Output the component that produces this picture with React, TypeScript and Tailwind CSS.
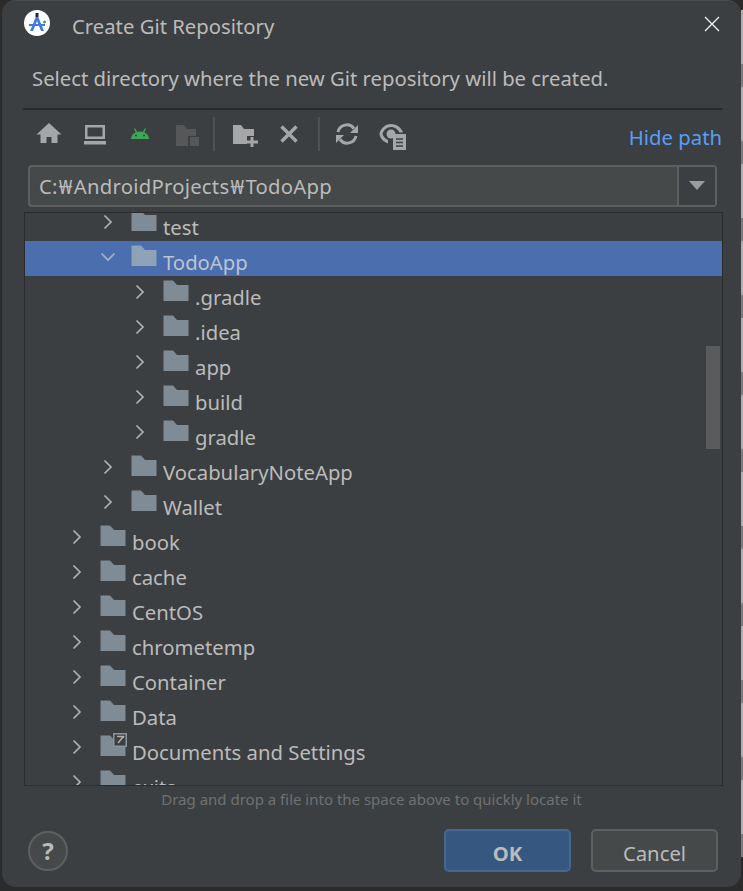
import type { ReactNode } from "react";

type Row = { name: string; depth: number; open?: boolean; selected?: boolean; link?: boolean };

const rows: Row[] = [
  { name: "test", depth: 2 },
  { name: "TodoApp", depth: 2, open: true, selected: true },
  { name: ".gradle", depth: 3 },
  { name: ".idea", depth: 3 },
  { name: "app", depth: 3 },
  { name: "build", depth: 3 },
  { name: "gradle", depth: 3 },
  { name: "VocabularyNoteApp", depth: 2 },
  { name: "Wallet", depth: 2 },
  { name: "book", depth: 1 },
  { name: "cache", depth: 1 },
  { name: "CentOS", depth: 1 },
  { name: "chrometemp", depth: 1 },
  { name: "Container", depth: 1 },
  { name: "Data", depth: 1 },
  { name: "Documents and Settings", depth: 1, link: true },
  { name: "exits", depth: 1 },
];

// the window behind the dialog shows through at the right edge
const bands = [0, 1, 2, 3, 4, 5, 6, 7, 8, 9, 10];

function Folder({ selected }: { selected?: boolean }) {
  return (
    <svg width="26" height="22" viewBox="0 0 26 22" className="shrink-0">
      <path d="M0.5 0.5H10L14 5H25.5V21H0.5Z" fill={selected ? "#8fa3b8" : "#7f8b95"} />
    </svg>
  );
}

function Chevron({ open }: { open?: boolean }) {
  return (
    <svg width="16" height="16" viewBox="0 0 16 16" className="shrink-0" fill="none" stroke={open ? "#a9b4c4" : "#afb1b3"} strokeWidth="1.7">
      {open ? <path d="M1.5 4.5L8 11L14.5 4.5" /> : <path d="M4.5 1.5L11 8L4.5 14.5" />}
    </svg>
  );
}

function TreeRow({ row }: { row: Row }) {
  const pad = row.depth === 1 ? "pl-[44px]" : row.depth === 2 ? "pl-[75px]" : "pl-[107px]";
  return (
    <div className={`flex h-[35px] items-center ${pad} ${row.selected ? "bg-[#4b6eaf] text-[#bbc4d2]" : "text-[#bbbbbb]"}`}>
      <div className="-mt-[3px]">
        <Chevron open={row.open} />
      </div>
      <div className="relative -mt-[5px] ml-[15px]">
        <Folder selected={row.selected} />
        {row.link ? (
          <svg width="14" height="14" viewBox="0 0 14 14" className="absolute -top-[2px] left-[13px]">
            <rect width="14" height="14" fill="#8a969f" />
            <rect x="1.5" y="1.5" width="11" height="11" fill="#3c3f41" />
            <path d="M4 3.5H10.5V5M10 4L5 10" fill="none" stroke="#afb1b3" strokeWidth="1.4" />
          </svg>
        ) : null}
      </div>
      <span className="ml-[6px] pt-[7px] text-[20.3px] leading-none">{row.name}</span>
    </div>
  );
}

function ToolIcon({ children }: { children: ReactNode }) {
  return (
    <svg width="26" height="26" viewBox="0 0 26 26" className="shrink-0 overflow-visible">
      {children}
    </svg>
  );
}

function Toolbar() {
  return (
    <div className="flex h-[46px] items-center pl-[34px] pr-[19px]">
      <div className="flex items-center gap-[20px]">
        <ToolIcon>
          <path d="M13 2L25.5 13.5H21.5V22H15.5V16H10.5V22H4.5V13.5H0.5Z" fill="#a4a6a8" />
        </ToolIcon>
        <ToolIcon>
          <path d="M3 4H23V18H3ZM5.5 6.5V15.5H20.5V6.5Z" fill="#a4a6a8" fillRule="evenodd" />
          <rect x="2" y="20" width="22" height="3.5" fill="#a4a6a8" />
        </ToolIcon>
        <ToolIcon>
          <path d="M3 18C3 13.5 7 10.5 12 10.5C17 10.5 21 13.5 21 18Z" fill="#3aa858" />
          <path d="M6.5 7.5L9 12M17.5 7.5L15 12" stroke="#3aa858" strokeWidth="1.4" />
          <circle cx="8" cy="14.5" r="1" fill="#3c3f41" />
          <circle cx="16" cy="14.5" r="1" fill="#3c3f41" />
        </ToolIcon>
        <ToolIcon>
          <path d="M2 4H10L13 8H22V15H14V25H2Z" fill="#555758" />
          <rect x="16" y="16" width="9" height="9" fill="#555758" />
        </ToolIcon>
      </div>
      <div className="ml-[13px] h-[34px] w-[2px] bg-[#4f5254]" />
      <div className="ml-[17px] flex items-center gap-[18px]">
        <ToolIcon>
          <path d="M1 4H9L12 8H22V15H15V23H1Z" fill="#a4a6a8" />
          <path d="M20 16V26M15 21H26" stroke="#a4a6a8" strokeWidth="3" />
        </ToolIcon>
        <ToolIcon>
          <path d="M5.5 5.5L20.5 20.5M20.5 5.5L5.5 20.5" stroke="#a4a6a8" strokeWidth="3.4" />
        </ToolIcon>
      </div>
      <div className="ml-[16px] h-[34px] w-[2px] bg-[#4f5254]" />
      <div className="ml-[14px] flex items-center gap-[19px]">
        <ToolIcon>
          <path d="M4 11A9 9 0 0 1 20 7.5" fill="none" stroke="#a4a6a8" strokeWidth="3" />
          <path d="M24 4V12H16Z" fill="#a4a6a8" />
          <path d="M22 15A9 9 0 0 1 6 18.5" fill="none" stroke="#a4a6a8" strokeWidth="3" />
          <path d="M2 22V14H10Z" fill="#a4a6a8" />
        </ToolIcon>
        <ToolIcon>
          <path d="M12 3C6 3 1 8 0.5 13C1 18 5 21 9 22.5V19C6.5 18 4.5 16 3.5 13C4.5 9 8 6 12 6C16 6 19 8.5 20.5 11.5H24C22.5 7 18 3 12 3Z" fill="#a4a6a8" />
          <circle cx="12" cy="13" r="4.5" fill="#a4a6a8" />
          <path d="M14 13H27V29H14Z" fill="#a4a6a8" />
          <path d="M17 18H24M17 21.5H24M17 25H24" stroke="#3c3f41" strokeWidth="1.5" />
        </ToolIcon>
      </div>
      <span className="ml-auto pt-[7px] text-[20.3px] leading-none text-[#589df6]">Hide path</span>
    </div>
  );
}

function Won() {
  return <span className="inline-block w-[16px] text-center">₩</span>;
}

export default function App() {
  return (
    <div className="flex h-[891px] w-[743px] overflow-hidden bg-[#2b2b2b] font-['Noto_Sans','Liberation_Sans',sans-serif]">
      <div className="w-[2px] shrink-0" />
      <div className="flex h-[887px] w-[739px] shrink-0 flex-col rounded-[14px] border-t border-[#4a4c4e] bg-[#3c3f41]">
        <header className="flex h-[52px] items-center pl-[22px] pr-[20px]">
          <svg width="26" height="26" viewBox="0 0 26 26" className="-mt-[8px] shrink-0">
            <circle cx="13" cy="13" r="13" fill="#ffffff" />
            <path d="M13 4L6 21H9L13 11L17 21H20Z" fill="#3f7be8" />
            <path d="M5 15H21" stroke="#3f7be8" strokeWidth="2" />
            <rect x="11.5" y="3" width="3" height="4" fill="#202a44" />
            <circle cx="20.5" cy="12" r="1.5" fill="#3aa858" />
          </svg>
          <span className="ml-[22px] pb-[2px] text-[20.3px] leading-none text-[#bbbbbb]">Create Git Repository</span>
          <svg width="16" height="16" viewBox="0 0 16 16" className="-mt-[6px] mr-[1px] ml-auto" fill="none" stroke="#eeeeee" strokeWidth="1.4">
            <path d="M1 1L15 15M15 1L1 15" />
          </svg>
        </header>
        <p className="flex h-[55px] items-center pb-[4px] pl-[30px] text-[20.3px] leading-none text-[#bbbbbb]">
          Select directory where the new Git repository will be created.
        </p>
        <div className="ml-[21px] mr-[18px] h-[2px] bg-[#2b2b2b]" />
        <div className="mt-[1px]">
          <Toolbar />
        </div>
        <div className="ml-[26px] mr-[24px] mt-[8px] flex h-[42px] rounded-[4px] border-2 border-[#5e6060] bg-[#45494a]">
          <span className="flex flex-1 items-center pl-[9px] pt-[1px] text-[20.3px] leading-none tracking-[0.25px] text-[#bbbbbb]">
            <span>
              C:
              <Won />
              AndroidProjects
              <Won />
              TodoApp
            </span>
          </span>
          <span className="flex w-[38px] items-center justify-center border-l-2 border-[#5e6060] bg-[#3c3f41]">
            <svg width="16" height="10" viewBox="0 0 16 10">
              <path d="M0 0H16L8 9Z" fill="#9a9c9e" />
            </svg>
          </span>
        </div>
        <div className="relative ml-[22px] mr-[18px] mt-[5px] h-[574px] overflow-hidden border border-[#2b2b2b]">
          <div className="-mt-[7px]">
            {rows.map((row) => (
              <TreeRow key={row.name} row={row} />
            ))}
          </div>
          <div className="absolute right-[2px] top-[133px] h-[103px] w-[14px] bg-[#595b5d]" />
        </div>
        <p className="mt-[2px] text-center text-[15px] leading-[22px] text-[#6f7173]">Drag and drop a file into the space above to quickly locate it</p>
        <footer className="mt-[19px] flex items-center pl-[26px] pr-[23px]">
          <span className="flex h-[40px] w-[40px] items-center justify-center rounded-full border-2 border-[#5e6060] bg-[#45494a] text-[24px] font-bold leading-none text-[#bbbbbb]">?</span>
          <button type="button" className="ml-auto h-[43px] w-[127px] rounded-[5px] border-2 border-[#43698f] bg-[#365880] pt-[5px] text-[20.3px] font-bold leading-none text-[#bbbbbb]">OK</button>
          <button type="button" className="ml-[20px] h-[43px] w-[127px] rounded-[5px] border-2 border-[#5e6060] bg-[#45494a] pt-[5px] text-[20.3px] leading-none text-[#bbbbbb]">Cancel</button>
        </footer>
      </div>
      <div className="flex w-[2px] shrink-0 flex-col pt-[10px]">
        {bands.map((b) => (
          <div key={b} className="shrink-0">
            <div className="h-[54px] bg-[#aeaeae]" />
            <div className="h-[23px] bg-[#7d7d7d]" />
          </div>
        ))}
      </div>
    </div>
  );
}
